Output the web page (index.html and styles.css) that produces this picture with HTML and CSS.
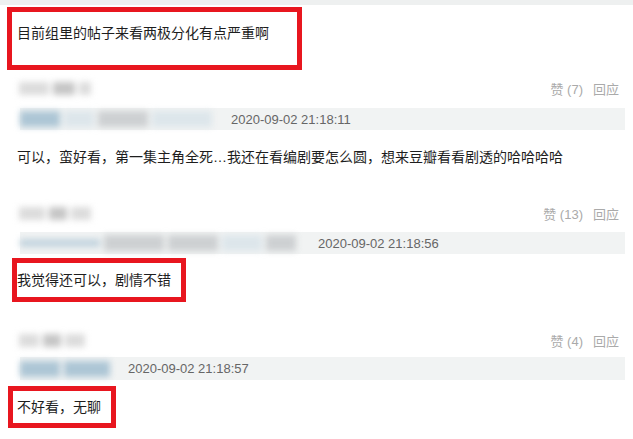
FILE: index.html
```html
<!DOCTYPE html>
<html lang="zh-CN">
<head>
<meta charset="utf-8">
<title>讨论</title>
<link rel="stylesheet" href="styles.css">
</head>
<body>
<div class="top-strip"></div>

<div class="topic-box">目前组里的帖子来看两极分化有点严重啊</div>

<div class="comment c1">
  <div class="comment-head">
    <span class="user-blur"><i class="b w30"></i><i class="b w22 dark"></i><i class="b w12"></i></span>
    <span class="actions"><span class="like">赞 (7)</span><span class="reply">回应</span></span>
  </div>
  <div class="meta">
    <span class="meta-blur"><i class="m w40 blue"></i><i class="m w30 pale"></i><i class="m w50 mid"></i><i class="m w60 pale"></i></span>
    <span class="date">2020-09-02 21:18:11</span>
  </div>
  <div class="content">可以，蛮好看，第一集主角全死…我还在看编剧要怎么圆，想来豆瓣看看剧透的哈哈哈哈</div>
</div>

<div class="comment c2">
  <div class="comment-head">
    <span class="user-blur"><i class="b w26"></i><i class="b w18 dark"></i><i class="b w20"></i></span>
    <span class="actions"><span class="like">赞 (13)</span><span class="reply">回应</span></span>
  </div>
  <div class="meta">
    <span class="meta-blur"><i class="m w80 text"></i><i class="m w60 mid"></i><i class="m w50 mid"></i><i class="m w40 pale"></i><i class="m w30 mid"></i></span>
    <span class="date">2020-09-02 21:18:56</span>
  </div>
  <div class="content boxed b2">我觉得还可以，剧情不错</div>
</div>

<div class="comment c3">
  <div class="comment-head">
    <span class="user-blur"><i class="b w20"></i><i class="b w18 dark"></i><i class="b w20"></i></span>
    <span class="actions"><span class="like">赞 (4)</span><span class="reply">回应</span></span>
  </div>
  <div class="meta">
    <span class="meta-blur"><i class="m w40 blue"></i><i class="m w50 blue"></i></span>
    <span class="date">2020-09-02 21:18:57</span>
  </div>
  <div class="content boxed b3">不好看，无聊</div>
</div>
</body>
</html>
```

FILE: styles.css
```css
html, body {
  margin: 0;
  padding: 0;
  background: #fff;
}

body {
  width: 633px;
  height: 439px;
  overflow: hidden;
  font-family: "Liberation Sans", "Noto Sans CJK SC", sans-serif;
  font-size: 14px;
  color: #1e1e1e;
}

.top-strip {
  height: 5px;
  background: #eef0f0;
}

/* highlighted post title */
.topic-box {
  box-sizing: border-box;
  margin: 2px 0 0 7px;
  width: 295px;
  height: 63px;
  border: 5px solid #e8161f;
  padding: 11px 0 0 5px;
  line-height: 20px;
}

.comment {
  padding: 0 8px 0 17px;
}

.c1 { margin-top: 8px; }
.c2 { margin-top: 36px; }
.c3 { margin-top: 28px; }

.comment-head {
  display: flex;
  justify-content: space-between;
  align-items: center;
  height: 20px;
}

.actions {
  display: flex;
  gap: 10px;
  margin-right: 6px;
  font-size: 13px;
  color: #aaa;
}

/* obscured user names */
.user-blur,
.meta-blur {
  display: flex;
  filter: blur(3px);
}

.user-blur {
  gap: 4px;
  margin-left: 2px;
}

.b {
  display: block;
  height: 13px;
  background: #dcdcdc;
}

.b.dark { background: #c6c6c6; }

.w12 { width: 12px; }
.w18 { width: 18px; }
.w20 { width: 20px; }
.w22 { width: 22px; }
.w26 { width: 26px; }
.w30 { width: 30px; }
.w40 { width: 40px; }
.w50 { width: 50px; }
.w60 { width: 60px; }
.w80 { width: 80px; }

.meta {
  display: flex;
  align-items: center;
  gap: 18px;
  margin-left: 3px;
  height: 22px;
  background: #f1f3f3;
  font-size: 13px;
  color: #666;
}

.c1 .meta { margin-top: 10px; }
.c2 .meta { margin-top: 9px; }
.c3 .meta { margin-top: 7px; height: 23px; }

.meta-blur {
  gap: 4px;
  height: 22px;
  align-items: center;
  overflow: hidden;
}

.m {
  display: block;
  flex: none;
  height: 16px;
}

.m.blue { background: #adc6d5; }
.m.pale { background: #dde6eb; }
.m.mid { background: #cdd0d2; }
.m.text { background: #c2d3de; height: 8px; }

.c1 .meta-blur { width: 193px; }
.c2 .meta-blur { width: 280px; }
.c3 .meta-blur { width: 90px; }

.content {
  line-height: 20px;
}

.c1 .content { margin-top: 17px; }

/* highlighted replies */
.boxed {
  display: inline-block;
  border: 5px solid #e8161f;
}

.b2 {
  margin: 4px 0 0 -5px;
  padding: 7px 10px 7px 0;
}

.b3 {
  margin: 6px 0 0 -9px;
  padding: 6px 10px 6px 4px;
}
```
